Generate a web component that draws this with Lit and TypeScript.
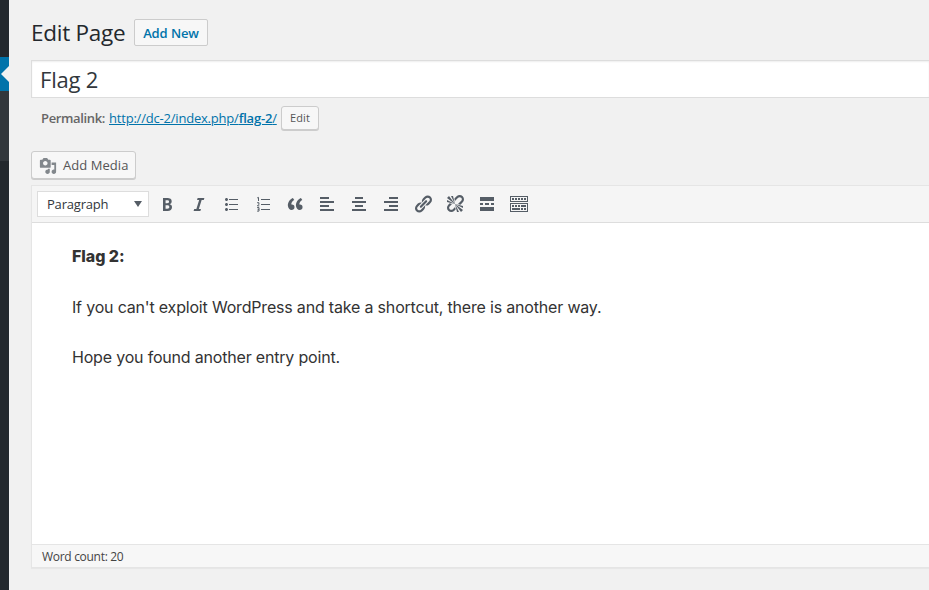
import { LitElement, html, css } from "lit";
import { customElement, property } from "lit/decorators.js";

const ICONS: Record<string, string> = {
  bold: "M6 4v13h4.54c1.37 0 2.46-.33 3.26-1 .8-.66 1.2-1.58 1.2-2.77 0-.84-.17-1.51-.51-2.01s-.9-.85-1.67-1.03v-.09c.57-.1 1.02-.4 1.36-.9s.51-1.13.51-1.91c0-1.14-.39-1.98-1.17-2.5C12.75 4.26 11.5 4 9.78 4H6zm2.57 5.15V6.26h1.36c.73 0 1.27.11 1.61.32.34.22.51.58.51 1.07 0 .54-.16.92-.47 1.15s-.82.35-1.51.35h-1.5zm0 2.19h1.6c1.44 0 2.16.53 2.16 1.61 0 .6-.17 1.05-.51 1.34s-.86.43-1.57.43H8.57v-3.38z",
  italic: "M14.78 6h-2.13l-2.8 9h2.12l-.62 2H4.6l.62-2h2.14l2.8-9H8.03l.62-2h6.75z",
  ul: "M5.5 7C4.67 7 4 6.33 4 5.5 4 4.68 4.67 4 5.5 4 6.32 4 7 4.68 7 5.5 7 6.33 6.32 7 5.5 7zM8 5h9v1H8V5zm-2.5 7c-.83 0-1.5-.67-1.5-1.5C4 9.68 4.67 9 5.5 9c.82 0 1.5.68 1.5 1.5 0 .83-.68 1.5-1.5 1.5zM8 10h9v1H8v-1zm-2.5 7c-.83 0-1.5-.67-1.5-1.5 0-.82.67-1.5 1.5-1.5.82 0 1.5.68 1.5 1.5 0 .83-.68 1.5-1.5 1.5zM8 15h9v1H8v-1z",
  ol: "M8 5h9v1H8zM8 10h9v1H8zM8 15h9v1H8z",
  quote: "M9.49 13.22c0-.74-.2-1.38-.61-1.9-.62-.78-1.83-.88-2.53-.72-.29-1.65 1.11-3.75 2.92-4.65L7.88 4c-2.73 1.3-5.42 4.28-4.96 8.05C3.21 14.43 4.59 16 6.54 16c.85 0 1.56-.25 2.12-.75s.83-1.18.83-2.03zm8.05 0c0-.74-.2-1.38-.61-1.9-.63-.78-1.83-.88-2.53-.72-.29-1.65 1.11-3.75 2.92-4.65L15.93 4c-2.73 1.3-5.41 4.28-4.95 8.05.29 2.38 1.66 3.95 3.61 3.95.85 0 1.56-.25 2.12-.75s.83-1.18.83-2.03z",
  left: "M12 5V3H3v2h9zm5 4V7H3v2h14zm-5 4v-2H3v2h9zm5 4v-2H3v2h14z",
  center: "M14 5V3H6v2h8zm3 4V7H3v2h14zm-3 4v-2H6v2h8zm3 4v-2H3v2h14z",
  right: "M17 5V3H8v2h9zm0 4V7H3v2h14zm0 4v-2H8v2h9zm0 4v-2H3v2h14z",
  link: "M17.74 2.76c1.68 1.69 1.68 4.41 0 6.1l-1.53 1.52c-1.12 1.12-2.7 1.47-4.14 1.09l2.62-2.61.76-.77.76-.76c.84-.84.84-2.2 0-3.04-.84-.85-2.2-.85-3.04 0l-.77.76-3.38 3.38c-.37-1.44-.02-3.02 1.1-4.14l1.52-1.53c1.69-1.68 4.42-1.68 6.1 0zM8.59 13.43l5.34-5.34c.42-.42.42-1.1 0-1.52-.44-.43-1.13-.39-1.53 0l-5.33 5.34c-.42.42-.42 1.1 0 1.52.44.43 1.13.39 1.52 0zm-.76 2.29l4.14-4.15c.38 1.44.03 3.02-1.09 4.14l-1.52 1.53c-1.69 1.68-4.41 1.68-6.1 0-1.68-1.68-1.68-4.42 0-6.1l1.53-1.52c1.12-1.12 2.7-1.47 4.14-1.1l-4.14 4.15c-.85.84-.85 2.2 0 3.05.84.84 2.2.84 3.04 0z",
  unlink: "M17.74 2.26c1.68 1.69 1.68 4.41 0 6.1l-1.53 1.52c-.32.33-.69.58-1.08.77L13 10l1.69-1.64.76-.77.76-.76c.84-.84.84-2.2 0-3.04-.84-.85-2.2-.85-3.04 0l-.77.76-.76.76L10 7l-.65-2.14c.19-.38.44-.75.77-1.07l1.52-1.53c1.69-1.68 4.42-1.68 6.1 0zM2 4l8 6-6-8zm4-2l4 8-2-8H6zM2 6l8 4-8-2V6zm7.36 7.69L10 13l.74 2.35-1.38 1.39c-1.69 1.68-4.41 1.68-6.1 0-1.68-1.68-1.68-4.42 0-6.1l1.39-1.38L7 10l-.69.64-1.52 1.53c-.85.84-.85 2.2 0 3.04.84.85 2.2.85 3.04 0zM18 16l-8-6 6 8zm-4 2l-4-8 2 8h2zm4-4l-8-4 8 2v2z",
  more: "M17 7V3H3v4h14zM6 11V9H3v2h3zm6 0V9H8v2h4zm5 0V9h-3v2h3zm0 6v-4H3v4h14z",
  toggle: "M19 2v6H1V2h18zm-1 5V3H2v4h16zM5 4v2H3V4h2zm3 0v2H6V4h2zm3 0v2H9V4h2zm3 0v2h-2V4h2zm3 0v2h-2V4h2zm2 5v9H1V9h18zm-1 8v-7H2v7h16zM5 11v2H3v-2h2zm3 0v2H6v-2h2zm3 0v2H9v-2h2zm6 0v2h-5v-2h5zm-6 3v2H3v-2h8zm3 0v2h-2v-2h2zm3 0v2h-2v-2h2z",
  media: "M13 11V4c0-.55-.45-1-1-1h-1.67L9 1H5L3.67 3H2c-.55 0-1 .45-1 1v7c0 .55.45 1 1 1h10c.55 0 1-.45 1-1zM7 4.5c1.38 0 2.5 1.12 2.5 2.5S8.38 9.5 7 9.5 4.5 8.38 4.5 7 5.62 4.5 7 4.5zM14 6h5v10.5c0 1.38-1.12 2.5-2.5 2.5S14 17.88 14 16.5s1.12-2.5 2.5-2.5c.17 0 .34.02.5.05V9h-3V6zm-4 8.05V13h2v3.5c0 1.38-1.12 2.5-2.5 2.5S7 17.88 7 16.5 8.12 14 9.5 14c.17 0 .34.02.5.05z",
};

/* Thin stroked marks beside the lines of the ordered-list icon. */
const MARKS: Record<string, string> = {
  ol: "M4.2 3.9 5.5 3.4V7M4.1 8.7H5.9V10.3L4.4 11.9H6.3M4.1 13.6H6V17.1H4.1M4.6 15.3H6",
};

@customElement("wp-icon")
export class WpIcon extends LitElement {
  @property() name = "bold";

  static styles = css`
    :host { display: block; width: 20px; height: 20px; }
    .glyph { display: block; width: 100%; height: 100%; fill: currentColor; }
    .marks { fill: none; stroke: currentColor; stroke-width: 1; }
  `;

  render() {
    return html`<svg class="glyph" viewBox="0 0 20 20" aria-hidden="true">
      <path d=${ICONS[this.name]}></path>
      <path class="marks" d=${MARKS[this.name] ?? ""}></path>
    </svg>`;
  }
}

const TOOLS = ["bold", "italic", "ul", "ol", "quote", "left", "center", "right", "link", "unlink", "more", "toggle"];

@customElement("app-root")
export class AppRoot extends LitElement {
  static styles = css`
    :host {
      display: flex;
      width: 100%;
      height: 590px;
      overflow: hidden;
      background: #f1f1f1;
      color: #444;
      font: 13px/18px "Open Sans", "Noto Sans", sans-serif;
    }
    * { box-sizing: border-box; }
    .rail { flex: none; width: 9px; background: #23282d; padding-top: 57px; }
    .current { height: 34px; background: #0073aa; display: flex; align-items: center; justify-content: flex-end; }
    .arrow { border: 8px solid transparent; border-left: 0; border-right-color: #f1f1f1; }
    .submenu { height: 70px; background: #32373c; }
    .main { flex: 1; min-width: 0; padding-left: 22px; display: flex; flex-direction: column; }
    .head { display: flex; align-items: flex-start; height: 60px; }
    .heading { margin: 18px 0 0; width: 103px; font-size: 22.5px; line-height: 30px; font-weight: 400; color: #23282d; letter-spacing: -0.25px; white-space: nowrap; }
    .btn { display: flex; align-items: center; justify-content: center; border: 1px solid #ccc; border-radius: 3px; background: #f7f7f7; color: #555; white-space: nowrap; }
    .add-new { margin-top: 19px; width: 74px; height: 27px; border-radius: 2px; color: #0073aa; font-weight: 600; letter-spacing: -0.1px; }
    .title { height: 38px; border: 1px solid #ddd; border-right: 0; background: #fff; box-shadow: inset 0 1px 2px rgba(0, 0, 0, 0.07); padding: 3px 8px; font-size: 22px; line-height: 30px; color: #32373c; letter-spacing: -0.2px; }
    .permalink { display: flex; align-items: center; height: 24px; margin-top: 8px; padding-left: 10px; color: #666; white-space: nowrap; }
    .label { width: 68px; font-weight: 600; letter-spacing: -0.35px; }
    .url { width: 172px; color: #0073aa; letter-spacing: -0.2px; }
    .url a { color: inherit; text-decoration: underline; }
    .slug { font-weight: 600; }
    .edit { width: 38px; height: 24px; font-size: 11px; letter-spacing: 0.1px; box-shadow: 0 1px 0 #ccc; }
    .media { margin-top: 21px; width: 105px; height: 28px; justify-content: flex-start; padding-left: 7px; gap: 6px; box-shadow: 0 1px 0 #ccc; letter-spacing: 0.05px; }
    .media wp-icon { width: 18px; height: 18px; margin-top: 2px; color: #82878c; }
    .editor { margin-top: 6px; height: 383px; border: 1px solid #e5e5e5; border-right: 0; display: flex; flex-direction: column; background: #fff; box-shadow: 0 1px 1px rgba(0, 0, 0, 0.04); }
    .toolbar { flex: none; height: 37px; border-bottom: 1px solid #ddd; background: #f5f5f5; display: flex; align-items: center; padding-left: 5px; color: #555d66; }
    .format { width: 112px; height: 26px; border: 1px solid #ddd; background: #fff; color: #32373c; display: flex; align-items: center; justify-content: space-between; padding: 0 6px 0 9px; margin-right: 8px; letter-spacing: -0.2px; }
    .caret { border: 4px solid transparent; border-top: 6px solid #555d66; border-bottom: 0; }
    .tools { display: flex; gap: 12px; }
    .content { flex: 1; padding: 20px 40px; font: 16px/27px Inter, sans-serif; color: #333; white-space: nowrap; }
    .content p { margin: 0 0 23.5px; height: 27px; }
    .l1 { letter-spacing: -0.05px; font-weight: 800; }
    .l2 { letter-spacing: -0.185px; }
    .l3 { letter-spacing: -0.19px; }
    .status { flex: none; height: 23px; border-top: 1px solid #e5e5e5; background: #f7f7f7; padding: 3px 10px 0; font-size: 12px; letter-spacing: -0.3px; }
  `;

  render() {
    return html`
      <nav class="rail">
        <div class="current"><span class="arrow"></span></div>
        <div class="submenu"></div>
      </nav>
      <main class="main">
        <header class="head">
          <h1 class="heading">Edit Page</h1>
          <a class="btn add-new">Add New</a>
        </header>
        <div class="title">Flag 2</div>
        <div class="permalink">
          <span class="label">Permalink:</span>
          <span class="url"><a href="#">http://dc-2/index.php/<b class="slug">flag-2</b>/</a></span>
          <span class="btn edit">Edit</span>
        </div>
        <div class="btn media"><wp-icon name="media"></wp-icon><span>Add Media</span></div>
        <section class="editor">
          <div class="toolbar">
            <div class="format"><span>Paragraph</span><span class="caret"></span></div>
            <div class="tools">${TOOLS.map((t) => html`<wp-icon name=${t}></wp-icon>`)}</div>
          </div>
          <div class="content">
            <p><strong class="l1">Flag 2:</strong></p>
            <p><span class="l2">If you can't exploit WordPress and take a shortcut, there is another way.</span></p>
            <p><span class="l3">Hope you found another entry point.</span></p>
          </div>
          <div class="status">Word count: 20</div>
        </section>
      </main>
    `;
  }
}
